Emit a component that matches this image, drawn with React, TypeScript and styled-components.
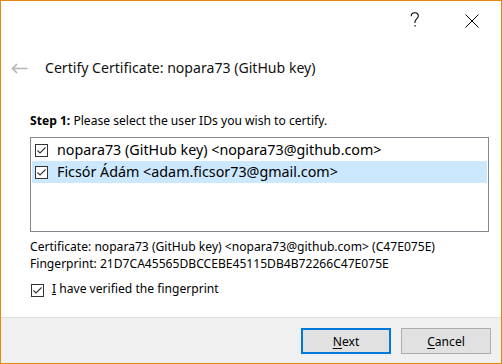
import * as React from 'react'
import styled, { createGlobalStyle } from 'styled-components'

// ______________________________________________________
//
// @ Global

const Global = createGlobalStyle`
  html, body {
    margin: 0;
    background: #fff;
  }
  body {
    font-family: "Noto Sans", "Open Sans", sans-serif;
    color: #000;
  }
`

// ______________________________________________________
//
// @ Data

type UserId = { label: string; selected: boolean }

const userIds: UserId[] = [
  { label: 'nopara73 (GitHub key) <nopara73@github.com>', selected: false },
  { label: 'Ficsór Ádám <adam.ficsor73@gmail.com>', selected: true },
]

// ______________________________________________________
//
// @ Icons

const CheckIcon = () => (
  <svg width="13" height="13" viewBox="0 0 13 13">
    <rect x="0.5" y="0.5" width="12" height="12" fill="#fff" stroke="#333" />
    <polyline points="2.5,6.5 5,9 10.5,3.5" fill="none" stroke="#333" strokeWidth="1.1" />
  </svg>
)

const HelpIcon = () => (
  <svg width="10" height="16" viewBox="0 0 10 16">
    <path d="M1.2 4.2 C1.2 1.8 3 0.8 4.8 0.8 C6.8 0.8 8.3 2.1 8.3 4 C8.3 6.6 5 7 5 9.6 V11" fill="none" stroke="#000" strokeWidth="1.1" />
    <rect x="4.4" y="13.2" width="1.3" height="1.3" fill="#000" />
  </svg>
)

const CloseIcon = () => (
  <svg width="14" height="14" viewBox="0 0 14 14">
    <path d="M0.5 0.5 L13.5 13.5 M13.5 0.5 L0.5 13.5" stroke="#000" strokeWidth="1" />
  </svg>
)

const BackIcon = () => (
  <svg width="17" height="11" viewBox="0 0 17 11">
    <path d="M16.5 5.5 H1.5 M6 1 L1.5 5.5 L6 10" fill="none" stroke="#b4b4b4" strokeWidth="1.6" />
  </svg>
)

// ______________________________________________________
//
// @ Styled

const Frame = styled.div`
  box-sizing: border-box;
  width: 502px;
  height: 364px;
  border: 1px solid #e8870f;
  display: flex;
  flex-direction: column;
  background: #fff;
`

const TitleBar = styled.div`
  height: 40px;
  display: flex;
  justify-content: flex-end;
  align-items: flex-start;
  padding-right: 1px;
`

const CaptionButton = styled.div<{ $top: number }>`
  width: 57px;
  height: 30px;
  display: flex;
  justify-content: center;
  padding-top: ${p => p.$top}px;
  box-sizing: border-box;
`

const Header = styled.div`
  margin-top: 17px;
  height: 20px;
  display: flex;
  align-items: center;
  padding-left: 10px;
  gap: 17px;
`

const Title = styled.h1`
  margin: 0;
  font-size: 14.1px;
  font-weight: normal;
  line-height: 20px;
  color: #111;
`

const Content = styled.div`
  padding: 35px 12px 0 29px;
  display: flex;
  flex-direction: column;
  flex: 1;
  font-size: 12.1px;
`

const Step = styled.p`
  margin: 0;
  line-height: 16px;
  white-space: nowrap;
  b {
    font-weight: bold;
  }
`

const List = styled.ul`
  box-sizing: border-box;
  margin: 8px 0 0;
  height: 95px;
  padding: 1px;
  list-style: none;
  border: 1px solid #828790;
`

const Item = styled.li<{ $selected: boolean }>`
  height: 22px;
  display: flex;
  align-items: center;
  gap: 9px;
  padding-left: 3px;
  background: ${p => (p.$selected ? '#cce8ff' : 'transparent')};
  font-size: 14.3px;
  line-height: 22px;
  white-space: nowrap;
  svg {
    margin-top: 1px;
  }
`

const Info = styled.div`
  margin-top: 7px;
  display: flex;
  flex-direction: column;
`

const InfoLine = styled.span`
  line-height: 16.5px;
  height: 16.5px;
  white-space: nowrap;
`

const Verify = styled.label`
  margin-top: 9px;
  display: flex;
  align-items: center;
  gap: 8px;
  padding-left: 1px;
  line-height: 16px;
  white-space: nowrap;
  svg {
    margin-top: 2px;
  }
`

const Footer = styled.div`
  height: 46px;
  border-top: 1px solid #dfdfdf;
  background: #f0f0f0;
  display: flex;
  justify-content: flex-end;
  align-items: flex-start;
  gap: 10px;
  padding: 10px 10px 0 0;
  box-sizing: border-box;
  flex-shrink: 0;
`

const Button = styled.button<{ $default?: boolean }>`
  box-sizing: border-box;
  width: 90px;
  height: 26px;
  padding: 0;
  margin: 0;
  background: #e1e1e1;
  border: ${p => (p.$default ? '2px solid #0078d7' : '1px solid #adadad')};
  font-family: inherit;
  font-size: 12.1px;
  color: #000;
  u {
    text-decoration: underline;
    text-underline-offset: 2px;
  }
`

// ______________________________________________________
//
// @ View

export default function App() {
  return (
    <Frame>
      <Global />
      <TitleBar>
        <CaptionButton $top={11}>
          <HelpIcon />
        </CaptionButton>
        <CaptionButton $top={13}>
          <CloseIcon />
        </CaptionButton>
      </TitleBar>
      <Header>
        <BackIcon />
        <Title>Certify Certificate: nopara73 (GitHub key)</Title>
      </Header>
      <Content>
        <Step>
          <b>Step 1:</b> Please select the user IDs you wish to certify.
        </Step>
        <List>
          {userIds.map(u => (
            <Item key={u.label} $selected={u.selected}>
              <CheckIcon />
              {u.label}
            </Item>
          ))}
        </List>
        <Info>
          <InfoLine>Certificate: nopara73 (GitHub key) &lt;nopara73@github.com&gt; (C47E075E)</InfoLine>
          <InfoLine>Fingerprint: 21D7CA45565DBCCEBE45115DB4B72266C47E075E</InfoLine>
        </Info>
        <Verify>
          <CheckIcon />
          <span>
            <u>I</u> have verified the fingerprint
          </span>
        </Verify>
      </Content>
      <Footer>
        <Button $default>
          <u>N</u>ext
        </Button>
        <Button>
          <u>C</u>ancel
        </Button>
      </Footer>
    </Frame>
  )
}
